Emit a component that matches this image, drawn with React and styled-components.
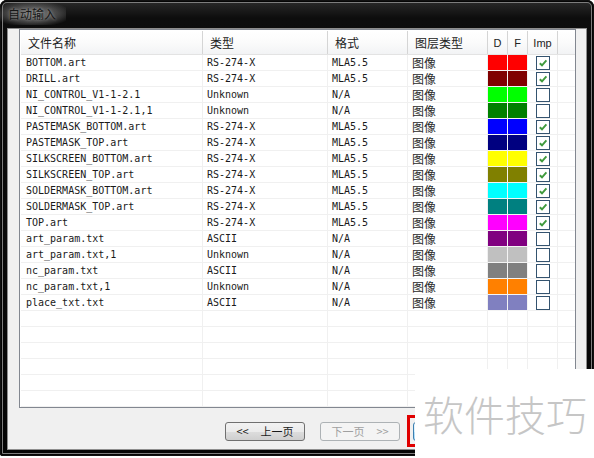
import React from 'react';
import styled, { createGlobalStyle } from 'styled-components';

const GlobalStyle = createGlobalStyle`
  body {
    margin: 0;
    background: #ffffff;
  }
  * {
    box-sizing: border-box;
  }
`;

const files = [
  { name: 'BOTTOM.art', type: 'RS-274-X', fmt: 'MLA5.5', color: '#ff0000', imp: true },
  { name: 'DRILL.art', type: 'RS-274-X', fmt: 'MLA5.5', color: '#800000', imp: true },
  { name: 'NI_CONTROL_V1-1-2.1', type: 'Unknown', fmt: 'N/A', color: '#00ff00', imp: false },
  { name: 'NI_CONTROL_V1-1-2.1,1', type: 'Unknown', fmt: 'N/A', color: '#008000', imp: false },
  { name: 'PASTEMASK_BOTTOM.art', type: 'RS-274-X', fmt: 'MLA5.5', color: '#0000ff', imp: true },
  { name: 'PASTEMASK_TOP.art', type: 'RS-274-X', fmt: 'MLA5.5', color: '#000080', imp: true },
  { name: 'SILKSCREEN_BOTTOM.art', type: 'RS-274-X', fmt: 'MLA5.5', color: '#ffff00', imp: true },
  { name: 'SILKSCREEN_TOP.art', type: 'RS-274-X', fmt: 'MLA5.5', color: '#808000', imp: true },
  { name: 'SOLDERMASK_BOTTOM.art', type: 'RS-274-X', fmt: 'MLA5.5', color: '#00ffff', imp: true },
  { name: 'SOLDERMASK_TOP.art', type: 'RS-274-X', fmt: 'MLA5.5', color: '#008080', imp: true },
  { name: 'TOP.art', type: 'RS-274-X', fmt: 'MLA5.5', color: '#ff00ff', imp: true },
  { name: 'art_param.txt', type: 'ASCII', fmt: 'N/A', color: '#800080', imp: false },
  { name: 'art_param.txt,1', type: 'Unknown', fmt: 'N/A', color: '#c0c0c0', imp: false },
  { name: 'nc_param.txt', type: 'ASCII', fmt: 'N/A', color: '#808080', imp: false },
  { name: 'nc_param.txt,1', type: 'Unknown', fmt: 'N/A', color: '#ff8000', imp: false },
  { name: 'place_txt.txt', type: 'ASCII', fmt: 'N/A', color: '#8080c0', imp: false },
];

const EMPTY_ROWS = 6;
const COLS = '182px 125px 80px 80px 20px 20px 30px 1fr';

const Stage = styled.div`
  position: relative;
  width: 594px;
  height: 458px;
  overflow: hidden;
  background: #ffffff;
`;

const Window = styled.div`
  width: 594px;
  height: 456px;
  display: flex;
  flex-direction: column;
  padding: 0 7px 6px 7px;
  border-radius: 7px 7px 3px 3px;
  background: linear-gradient(180deg, #2c2c2c 0%, #0d0d0d 18px, #050505 100%);
  box-shadow: inset 0 0 0 1px #111, inset 0 0 0 2px #050505, inset 0 0 0 3px #7d7d7d;
`;

const TitleBar = styled.div`
  height: 28px;
  flex: none;
  display: flex;
  align-items: center;
`;

const Title = styled.span`
  margin-left: -8px;
  padding: 3px 10px 3px 9px;
  font-family: "Noto Sans CJK SC", sans-serif;
  font-size: 12px;
  line-height: 16px;
  color: #161616;
  background: radial-gradient(ellipse at center, rgba(170, 170, 170, 0.75) 0%, rgba(120, 120, 120, 0.45) 55%, rgba(60, 60, 60, 0) 85%);
  text-shadow: 0 0 3px #9a9a9a;
`;

const Client = styled.div`
  flex: 1;
  display: flex;
  flex-direction: column;
  background: #f0f0f0;
  border: 1px solid #8e8e8e;
  padding: 0 10px 0 11px;
`;

const List = styled.div`
  height: 379px;
  flex: none;
  border: 1px solid #828790;
  background: #ffffff;
  padding: 1px 0 0 1px;
  overflow: hidden;
`;

const HeaderRow = styled.div`
  display: grid;
  grid-template-columns: ${COLS};
  height: 24px;
  background: linear-gradient(180deg, #ffffff 0%, #fbfbfb 50%, #f2f3f5 100%);
  border-bottom: 1px solid #e3e3e3;
`;

const HeadCell = styled.div`
  display: flex;
  align-items: center;
  justify-content: ${(p) => (p.$center ? 'center' : 'flex-start')};
  padding-left: ${(p) => (p.$center ? '0' : '7px')};
  border-right: ${(p) => (p.$last ? 'none' : '1px solid #d5d5d5')};
  font-family: ${(p) => (p.$latin ? '"Liberation Sans", Arial, sans-serif' : '"Noto Sans CJK SC", sans-serif')};
  font-size: ${(p) => (p.$latin ? '11px' : '12px')};
  color: #222;
`;

const Row = styled.div`
  display: grid;
  grid-template-columns: ${COLS};
  height: 16px;
`;

const Cell = styled.div`
  display: flex;
  align-items: center;
  padding-left: ${(p) => (p.$first ? '5px' : '4px')};
  border-right: 1px solid #f0f0f0;
  border-bottom: 1px solid #f0f0f0;
  font-family: "DejaVu Sans Mono", "Liberation Mono", monospace;
  font-size: 10px;
  color: #1a1a1a;
  white-space: nowrap;
  overflow: hidden;
`;

const Cjk = styled.span`
  font-family: "Noto Sans CJK SC", sans-serif;
  font-size: 12px;
  color: #2a2a2a;
`;

const Swatch = styled.div`
  background: ${(p) => p.$color};
  border-right: 1px solid #f4f4f4;
  border-bottom: 1px solid #f4f4f4;
`;

const CheckCell = styled.div`
  display: flex;
  align-items: center;
  justify-content: center;
  padding-left: 1px;
  border-right: 1px solid #f0f0f0;
  border-bottom: 1px solid #f0f0f0;
`;

const Box = styled.div`
  width: 14px;
  height: 14px;
  border: 1px solid #34536f;
  background: #ffffff;
  display: flex;
  align-items: center;
  justify-content: center;
`;

const Filler = styled.div`
  border-bottom: 1px solid #f0f0f0;
`;

const ButtonRow = styled.div`
  display: flex;
  align-items: center;
  gap: 15px;
  height: 32px;
  margin-top: 7px;
  padding-left: 206px;
`;

const Button = styled.div`
  width: 80px;
  height: 19px;
  display: flex;
  align-items: center;
  justify-content: center;
  gap: 12px;
  border: 1px solid ${(p) => (p.$disabled ? '#adb2b5' : '#707070')};
  border-radius: 3px;
  background: ${(p) =>
    p.$disabled
      ? '#f4f4f4'
      : 'linear-gradient(180deg, #f2f2f2 0%, #ebebeb 50%, #dddddd 51%, #cfcfcf 100%)'};
  font-family: "Noto Sans CJK SC", sans-serif;
  font-size: 11px;
  color: ${(p) => (p.$disabled ? '#a0a0a0' : '#1a1a1a')};
`;

const Mark = styled.div`
  margin-left: -8px;
  height: 32px;
  width: 96px;
  border: 3px solid #e00000;
  padding: 3px;
  display: flex;
  align-items: center;
`;

const PrimaryButton = styled.div`
  width: 80px;
  height: 19px;
  border: 1px solid #3c7fb1;
  border-radius: 3px;
  background: linear-gradient(180deg, #eaf6fd 0%, #d9f0fc 50%, #bee6fd 51%, #a7d9f5 100%);
`;

const Watermark = styled.div`
  position: absolute;
  left: 415px;
  top: 369px;
  right: 0;
  bottom: 0;
  background: #ffffff;
  display: flex;
  align-items: center;
  justify-content: center;
  font-family: "Noto Sans CJK SC", sans-serif;
  font-weight: 300;
  font-size: 41px;
  line-height: 1;
  color: #c6c6c6;
  padding-left: 1px;
`;

function Check() {
  return (
    <svg width="10" height="10" viewBox="0 0 10 10">
      <path d="M1.8 5.2 L4 7.3 L8.4 2.3" fill="none" stroke="#3f9a3c" strokeWidth="1.9" />
    </svg>
  );
}

function FileRow({ file }) {
  return (
    <Row>
      <Cell $first>{file.name}</Cell>
      <Cell>{file.type}</Cell>
      <Cell>{file.fmt}</Cell>
      <Cell>
        <Cjk>图像</Cjk>
      </Cell>
      <Swatch $color={file.color} />
      <Swatch $color={file.color} />
      <CheckCell>
        <Box>{file.imp && <Check />}</Box>
      </CheckCell>
      <Filler />
    </Row>
  );
}

function EmptyRow() {
  return (
    <Row>
      <Cell />
      <Cell />
      <Cell />
      <Cell />
      <Cell />
      <Cell />
      <Cell />
      <Filler />
    </Row>
  );
}

export default function App() {
  return (
    <>
      <GlobalStyle />
      <Stage>
        <Window>
          <TitleBar>
            <Title>自动输入</Title>
          </TitleBar>
          <Client>
            <List>
              <HeaderRow>
                <HeadCell>文件名称</HeadCell>
                <HeadCell>类型</HeadCell>
                <HeadCell>格式</HeadCell>
                <HeadCell>图层类型</HeadCell>
                <HeadCell $latin $center>D</HeadCell>
                <HeadCell $latin $center>F</HeadCell>
                <HeadCell $latin $center>Imp</HeadCell>
                <HeadCell $last />
              </HeaderRow>
              {files.map((f) => (
                <FileRow key={f.name} file={f} />
              ))}
              {Array.from({ length: EMPTY_ROWS }).map((_, i) => (
                <EmptyRow key={i} />
              ))}
            </List>
            <ButtonRow>
              <Button>
                <span>&lt;&lt;</span>
                <span>上一页</span>
              </Button>
              <Button $disabled>
                <span>下一页</span>
                <span>&gt;&gt;</span>
              </Button>
              <Mark>
                <PrimaryButton />
              </Mark>
            </ButtonRow>
          </Client>
        </Window>
        <Watermark>软件技巧</Watermark>
      </Stage>
    </>
  );
}
